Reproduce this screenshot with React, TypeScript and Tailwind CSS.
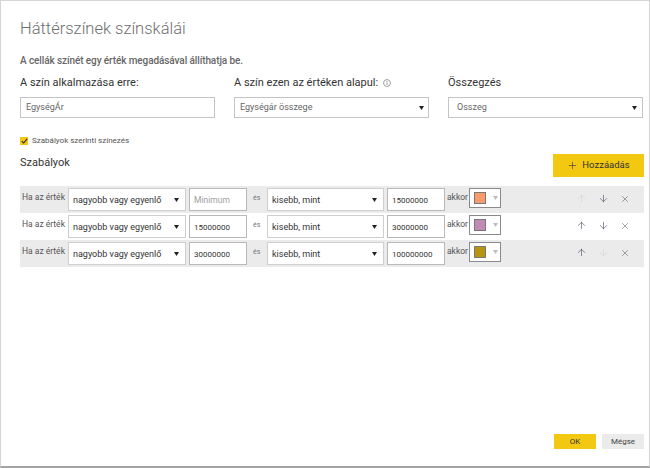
import { ArrowDown, ArrowUp, X, Plus } from "lucide-react";

const rules = [
  { from: "", to: "15000000", color: "#fb9a6b", upOff: true, downOff: false, gray: true },
  { from: "15000000", to: "30000000", color: "#c18bb6", upOff: false, downOff: false, gray: false },
  { from: "30000000", to: "100000000", color: "#b8950f", upOff: false, downOff: true, gray: true },
];

const Caret = () => (
  <svg width="5" height="4" viewBox="0 0 5 4" className="shrink-0">
    <path d="M0 0H5L2.5 4Z" fill="#222" />
  </svg>
);

const SelectBox = (props: { text: string; w: string }) => {
  return (
    <div className={`${props.w} h-[23px] bg-white border border-[#cfcfcf] flex items-center justify-between pl-[4px] pr-[6px]`}>
      <span className="text-[9px] text-[#333] whitespace-nowrap pt-[2px]">{props.text}</span>
      <Caret />
    </div>
  );
};

const NumberBox = (props: { value: string }) => {
  return (
    <div className="w-[58px] h-[23px] bg-white border border-[#b9b9b9] flex items-center pl-[4px]">
      {props.value ? (
        <span className="text-[8px] text-[#333] pt-[2px]">{props.value}</span>
      ) : (
        <span className="text-[8.5px] text-[#a0a0a0] pt-[2px]">Minimum</span>
      )}
    </div>
  );
};

const RuleRow = (props: { rule: typeof rules[number] }) => {
  const r = props.rule;
  return (
    <div className={`h-[27px] flex items-start pt-[2px] pl-[2px] ${r.gray ? "bg-[#ebebeb]" : "bg-white"}`}>
      <span className="w-[44px] text-[8.5px] text-[#555] whitespace-nowrap pt-[3px]">Ha az érték</span>
      <div className="ml-[2px]">
        <SelectBox text="nagyobb vagy egyenlő" w="w-[118px]" />
      </div>
      <div className="ml-[3px]">
        <NumberBox value={r.from} />
      </div>
      <span className="w-[20px] text-[7px] text-[#777] pl-[6px] pt-[5px]">és</span>
      <SelectBox text="kisebb, mint" w="w-[117px]" />
      <div className="ml-[3px]">
        <NumberBox value={r.to} />
      </div>
      <span className="w-[24px] text-[8.5px] text-[#555] pl-[2px] pt-[3px]">akkor</span>
      <div className="w-[32px] h-[20px] bg-white border border-[#8a8a8a] flex items-center pl-[4px] gap-[7px]">
        <div className="w-[12px] h-[12px] border border-[#777]" style={{ backgroundColor: r.color }} />
        <svg width="5" height="4" viewBox="0 0 5 4">
          <path d="M0 0H5L2.5 4Z" fill="#bdbdbd" />
        </svg>
      </div>
      <div className="flex-1 flex justify-end items-center h-[21px] pr-[14px] gap-[11px]">
        <ArrowUp size={11} strokeWidth={1.3} color={r.upOff ? "#d2d2d2" : "#4a3f5c"} />
        <ArrowDown size={11} strokeWidth={1.3} color={r.downOff ? "#d2d2d2" : "#4a3f5c"} />
        <X size={10} strokeWidth={1.3} color="#555" />
      </div>
    </div>
  );
};

const App = () => {
  return (
    <div className="w-[650px] h-[468px] bg-white border-l border-t border-r border-[#d4d4d4] border-b-2 border-b-[#a3a3a3] pl-[19px] pr-[5px] pt-[17px] flex flex-col font-['Roboto',sans-serif]">
      <h1 className="text-[16.5px] font-light leading-[22px] text-[#6e6e6e]">Háttérszínek színskálái</h1>
      <p className="mt-[14px] text-[10px] leading-[14px] font-medium text-[#666] tracking-[-0.1px]">
        A cellák színét egy érték megadásával állíthatja be.
      </p>

      <div className="mt-[7px] grid grid-cols-[195px_195px_195px] gap-x-[19px]">
        <div>
          <div className="text-[11px] leading-[16px] text-[#333]">A szín alkalmazása erre:</div>
          <div className="mt-[6px] h-[21px] border border-[#c4c4c4] flex items-center pl-[5px]">
            <span className="text-[9px] text-[#666] pt-[1px]">EgységÁr</span>
          </div>
        </div>
        <div>
          <div className="text-[11px] leading-[16px] text-[#333] flex items-center gap-[5px]">
            <span>A szín ezen az értéken alapul:</span>
            <svg width="8" height="8" viewBox="0 0 10 10">
              <circle cx="5" cy="5" r="4.3" fill="none" stroke="#888" strokeWidth="1" />
              <path d="M5 4.3V7.4" stroke="#888" strokeWidth="1.1" />
              <circle cx="5" cy="2.9" r="0.7" fill="#888" />
            </svg>
          </div>
          <div className="mt-[6px] h-[21px] border border-[#c4c4c4] flex items-center justify-between pl-[5px] pr-[4px]">
            <span className="text-[9px] text-[#666] pt-[1px]">Egységár összege</span>
            <Caret />
          </div>
        </div>
        <div>
          <div className="text-[11px] leading-[16px] text-[#333]">Összegzés</div>
          <div className="mt-[6px] h-[21px] border border-[#c4c4c4] flex items-center justify-between pl-[8px] pr-[5px]">
            <span className="text-[9px] text-[#666] pt-[1px]">Osszeg</span>
            <Caret />
          </div>
        </div>
      </div>

      <div className="mt-[16px] h-[14px] flex items-center gap-[4px]">
        <div className="w-[8px] h-[8px] bg-[#f2c811] flex items-center justify-center">
          <svg width="7" height="6" viewBox="0 0 7 6">
            <path d="M0.8 3.2L2.7 5L6.2 0.9" fill="none" stroke="#333" strokeWidth="1.2" />
          </svg>
        </div>
        <span className="text-[8px] text-[#555]">Szabályok szerinti színezés</span>
      </div>

      <div className="mt-[6px] flex items-start justify-between">
        <span className="text-[11px] leading-[16px] text-[#333] pt-[1px]">Szabályok</span>
        <button className="w-[91px] h-[23px] bg-[#f2c811] flex items-center justify-center gap-[4px]">
          <Plus size={11} strokeWidth={1.3} color="#333" />
          <span className="text-[9.5px] text-[#333]">Hozzáadás</span>
        </button>
      </div>

      <div className="mt-[9px] flex flex-col">
        {rules.map((r, i) => (
          <RuleRow key={i} rule={r} />
        ))}
      </div>

      <div className="mt-auto mb-[17px] flex justify-end gap-[6px]">
        <button className="w-[42px] h-[15px] bg-[#f2c811] text-[8px] text-[#333] leading-[15px]">OK</button>
        <button className="w-[42px] h-[15px] bg-[#ebebeb] text-[8px] text-[#444] leading-[15px]">Mégse</button>
      </div>
    </div>
  );
};

export default App;
